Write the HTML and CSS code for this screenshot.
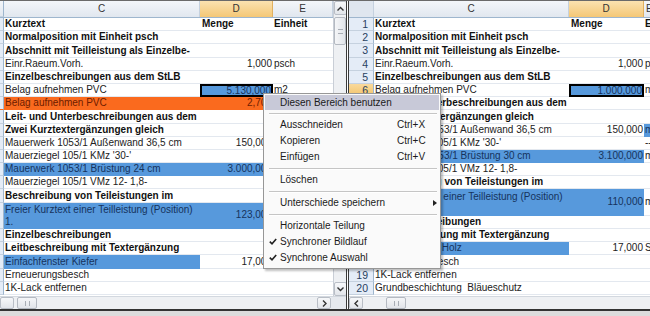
FILE: index.html
```html
<!DOCTYPE html>
<html lang="de">
<head>
    <meta charset="UTF-8">
    <title>Vergleich nebeneinander</title>
    <link rel="stylesheet" href="styles.css">
</head>
<body>
<div class="window">
    <div class="panes">
        <!-- linkes Fenster -->
        <div class="pane pane-left">
            <div class="sheet">
                <div class="grid">
                    <div class="row head">
                        <div class="strip"></div>
                        <div class="hc">C</div>
                        <div class="hc sel">D</div>
                        <div class="hc">E</div>
                    </div>
                    <div class="row"><div class="strip"></div><div class="c b">Kurztext</div><div class="d b left">Menge</div><div class="e b">Einheit</div></div>
                    <div class="row"><div class="strip"></div><div class="c b">Normalposition mit Einheit psch</div><div class="d"></div><div class="e"></div></div>
                    <div class="row"><div class="strip"></div><div class="c b">Abschnitt mit Teilleistung als Einzelbe-</div><div class="d"></div><div class="e"></div></div>
                    <div class="row"><div class="strip"></div><div class="c">Einr.Raeum.Vorh.</div><div class="d">1,000</div><div class="e">psch</div></div>
                    <div class="row"><div class="strip"></div><div class="c b">Einzelbeschreibungen aus dem StLB</div><div class="d"></div><div class="e"></div></div>
                    <div class="row"><div class="strip"></div><div class="c">Belag aufnehmen PVC</div><div class="d active">5.130,000</div><div class="e">m2</div></div>
                    <div class="row orange"><div class="strip"></div><div class="c">Belag aufnehmen PVC</div><div class="d">2,700</div><div class="e">m2</div></div>
                    <div class="row"><div class="strip"></div><div class="c b">Leit- und Unterbeschreibungen aus dem</div><div class="d"></div><div class="e"></div></div>
                    <div class="row"><div class="strip"></div><div class="c b">Zwei Kurztextergänzungen gleich</div><div class="d"></div><div class="e"></div></div>
                    <div class="row"><div class="strip"></div><div class="c">Mauerwerk 1053/1 Außenwand 36,5 cm</div><div class="d">150,000</div><div class="e">m2</div></div>
                    <div class="row"><div class="strip"></div><div class="c">Mauerziegel 105/1 KMz '30-'</div><div class="d"></div><div class="e"></div></div>
                    <div class="row blue"><div class="strip"></div><div class="c">Mauerwerk 1053/1 Brüstung 24 cm</div><div class="d">3.000,000</div><div class="e">m</div></div>
                    <div class="row"><div class="strip"></div><div class="c">Mauerziegel 105/1 VMz 12- 1,8-</div><div class="d"></div><div class="e"></div></div>
                    <div class="row"><div class="strip"></div><div class="c b">Beschreibung von Teileistungen im</div><div class="d"></div><div class="e"></div></div>
                    <div class="row tall blue"><div class="strip"></div><div class="c">Freier Kurztext einer Teilleistung (Position)<br>1.</div><div class="d">123,000</div><div class="e">m</div></div>
                    <div class="row"><div class="strip"></div><div class="c b">Einzelbeschreibungen</div><div class="d"></div><div class="e"></div></div>
                    <div class="row"><div class="strip"></div><div class="c b">Leitbeschreibung mit Textergänzung</div><div class="d"></div><div class="e"></div></div>
                    <div class="row"><div class="strip"></div><div class="c fill">Einfachfenster Kiefer</div><div class="d">17,000</div><div class="e">St</div></div>
                    <div class="row"><div class="strip"></div><div class="c">Erneuerungsbesch</div><div class="d"></div><div class="e"></div></div>
                    <div class="row"><div class="strip"></div><div class="c">1K-Lack entfernen</div><div class="d"></div><div class="e"></div></div>
                </div>
                <div class="vscroll">
                    <div class="sbtn"><svg width="7" height="5" viewBox="0 0 7 5"><path d="M0.5 4.5 L3.5 1.5 L6.5 4.5" fill="none" stroke="#333" stroke-width="1.4"/></svg></div>
                    <div class="vthumb"><span class="grip"></span></div>
                    <div class="vtrack"></div>
                    <div class="sbtn"><svg width="7" height="5" viewBox="0 0 7 5"><path d="M0.5 0.5 L3.5 3.5 L6.5 0.5" fill="none" stroke="#333" stroke-width="1.4"/></svg></div>
                </div>
            </div>
            <div class="hscroll">
                <div class="sbtn"></div>
                <div class="hthumb"><span class="hgrip"></span></div>
                <div class="htrack"></div>
                <div class="sbtn"><svg width="5" height="7" viewBox="0 0 5 7"><path d="M1 0.5 L4 3.5 L1 6.5" fill="none" stroke="#333" stroke-width="1.4"/></svg></div>
                <div class="corner"></div>
            </div>
        </div>

        <div class="split"></div>

        <!-- rechtes Fenster -->
        <div class="pane pane-right">
            <div class="grid">
                <div class="row head">
                    <div class="hc corner-cell"></div>
                    <div class="hc">C</div>
                    <div class="hc sel">D</div>
                    <div class="hc cut">E</div>
                </div>
                <div class="row"><div class="num">1</div><div class="c b">Kurztext</div><div class="d b left">Menge</div><div class="e b">Einheit</div></div>
                <div class="row"><div class="num">2</div><div class="c b">Normalposition mit Einheit psch</div><div class="d"></div><div class="e"></div></div>
                <div class="row"><div class="num">3</div><div class="c b">Abschnitt mit Teilleistung als Einzelbe-</div><div class="d"></div><div class="e"></div></div>
                <div class="row"><div class="num">4</div><div class="c">Einr.Raeum.Vorh.</div><div class="d">1,000</div><div class="e">psch</div></div>
                <div class="row"><div class="num">5</div><div class="c b">Einzelbeschreibungen aus dem StLB</div><div class="d"></div><div class="e"></div></div>
                <div class="row"><div class="num cur">6</div><div class="c">Belag aufnehmen PVC</div><div class="d active">1.000,000</div><div class="e">m2</div></div>
                <div class="row"><div class="num">7</div><div class="c b">Leit- und Unterbeschreibungen aus dem</div><div class="d"></div><div class="e"></div></div>
                <div class="row"><div class="num">8</div><div class="c b">Zwei Kurztextergänzungen gleich</div><div class="d"></div><div class="e"></div></div>
                <div class="row"><div class="num">9</div><div class="c">Mauerwerk 1053/1 Außenwand 36,5 cm</div><div class="d">150,000</div><div class="e fill">m2</div></div>
                <div class="row"><div class="num">10</div><div class="c">Mauerziegel 105/1 KMz '30-'</div><div class="d"></div><div class="e">--</div></div>
                <div class="row blue-cd"><div class="num">11</div><div class="c">Mauerwerk 1053/1 Brüstung 30 cm</div><div class="d">3.100,000</div><div class="e">m</div></div>
                <div class="row"><div class="num">12</div><div class="c">Mauerziegel 105/1 VMz 12- 1,8-</div><div class="d"></div><div class="e"></div></div>
                <div class="row"><div class="num">13</div><div class="c b">Beschreibung von Teileistungen im</div><div class="d"></div><div class="e"></div></div>
                <div class="row tall blue-cd"><div class="num">14</div><div class="c">Freier Kurztext einer Teilleistung (Position)<br>1.</div><div class="d">110,000</div><div class="e">m</div></div>
                <div class="row"><div class="num">15</div><div class="c b">Einzelbeschreibungen</div><div class="d"></div><div class="e"></div></div>
                <div class="row"><div class="num">16</div><div class="c b">Leitbeschreibung mit Textergänzung</div><div class="d"></div><div class="e"></div></div>
                <div class="row"><div class="num">17</div><div class="c fill">Einfachfenster Holz</div><div class="d">17,000</div><div class="e">St</div></div>
                <div class="row"><div class="num">18</div><div class="c">Erneuerungsbesch</div><div class="d"></div><div class="e"></div></div>
                <div class="row"><div class="num">19</div><div class="c">1K-Lack entfernen</div><div class="d"></div><div class="e"></div></div>
                <div class="row"><div class="num">20</div><div class="c">Grundbeschichtung&nbsp; Bläueschutz</div><div class="d"></div><div class="e"></div></div>
            </div>
            <div class="hscroll">
                <div class="sbtn"><svg width="5" height="7" viewBox="0 0 5 7"><path d="M4 0.5 L1 3.5 L4 6.5" fill="none" stroke="#333" stroke-width="1.4"/></svg></div>
                <div class="gap"></div>
                <div class="hthumb"><span class="hgrip"></span></div>
                <div class="htrack"></div>
            </div>
        </div>
    </div>
    <div class="statusbar"></div>

    <!-- Kontextmenü -->
    <div class="menu">
        <div class="item hot">Diesen Bereich benutzen</div>
        <div class="sep"></div>
        <div class="item">Ausschneiden<span class="key">Ctrl+X</span></div>
        <div class="item">Kopieren<span class="key">Ctrl+C</span></div>
        <div class="item">Einfügen<span class="key">Ctrl+V</span></div>
        <div class="sep"></div>
        <div class="item">Löschen</div>
        <div class="sep"></div>
        <div class="item">Unterschiede speichern<span class="arrow"></span></div>
        <div class="sep"></div>
        <div class="item">Horizontale Teilung</div>
        <div class="item"><svg class="check" width="8" height="7" viewBox="0 0 8 7"><path d="M0.8 3.6 L3 5.8 L7.2 1" fill="none" stroke="#222" stroke-width="1.6"/></svg>Synchroner Bildlauf</div>
        <div class="item"><svg class="check" width="8" height="7" viewBox="0 0 8 7"><path d="M0.8 3.6 L3 5.8 L7.2 1" fill="none" stroke="#222" stroke-width="1.6"/></svg>Synchrone Auswahl</div>
    </div>
</div>
</body>
</html>
```

FILE: styles.css
```css
* {
    box-sizing: border-box;
}

body {
    margin: 0;
    padding: 0;
    font-family: 'Liberation Sans', Arial, sans-serif;
    font-size: 10px;
    color: #222;
    background: #fff;
}

.window {
    position: relative;
    width: 650px;
    height: 316px;
    overflow: hidden;
    border-top: 1px solid #6a6a6a;
}

.panes {
    display: flex;
    height: 308px;
}

.pane {
    display: flex;
    flex-direction: column;
    overflow: hidden;
}

.pane-left {
    width: 346px;
}

.pane-right {
    flex: 1;
}

.sheet {
    display: flex;
    flex: 1;
}

.grid {
    flex: 1;
    overflow: hidden;
}

.row {
    display: grid;
    height: 13.2px;
    line-height: 12px;
    white-space: nowrap;
}

.pane-left .row {
    grid-template-columns: 4px 196px 73px 60px;
}

.pane-right .row {
    grid-template-columns: 25px 195px 75px 80px;
}

.row.tall {
    height: 26.4px;
}

.row.head {
    height: 17px;
    line-height: 16px;
    background: linear-gradient(#f3f6fa, #e1e7ef);
    border-bottom: 1px solid #9eb6ce;
}

.hc {
    text-align: center;
    color: #333;
    border-right: 1px solid #c5d1df;
}

.hc.sel {
    background: linear-gradient(#fbe2b0, #f4c776);
    border-right-color: #e0b060;
}

.hc.cut {
    text-align: left;
    padding-left: 2px;
}

.strip {
    background: #e4ecf7;
    border-right: 1px solid #9eb6ce;
    border-bottom: 1px solid #c5d1df;
}

.head .strip {
    background: transparent;
}

.c, .d, .e {
    padding: 0 2px;
    overflow: hidden;
    border-bottom: 1px solid #e3e8ef;
    display: flex;
    align-items: flex-end;
}

.c {
    padding-left: 1px;
}

.d {
    justify-content: flex-end;
    padding-right: 1px;
}

.d.left {
    justify-content: flex-start;
}

.e {
    padding-left: 1px;
    overflow: visible;
}

.tall .d, .tall .e {
    align-items: center;
}

.b {
    font-weight: bold;
    color: #111;
}

.num {
    background: #e4ecf7;
    border-right: 1px solid #9eb6ce;
    border-bottom: 1px solid #c5d1df;
    text-align: right;
    padding-right: 5px;
    color: #27415f;
    font-size: 10.5px;
}

.num.cur {
    background: linear-gradient(#f9d99c, #f3c46b);
}

.corner-cell {
    background: #dfe6ef;
}

/* Hervorhebungen */
.orange > div {
    background: #fa6a1e;
    color: #6d1c00;
    border-bottom-color: #fa6a1e;
}

.orange > .strip {
    background: #e4ecf7;
}

.blue .c, .blue .d,
.blue-cd .c, .blue-cd .d,
.fill {
    background: #5799dc;
    color: #16335c;
    border-bottom-color: #5799dc;
}

.active {
    background: #5799dc;
    color: #16335c;
    border: 2px solid #000;
    padding-right: 0;
    align-items: center;
}

/* Bildlaufleisten */
.vscroll {
    width: 13px;
    display: flex;
    flex-direction: column;
    background: #eef0f3;
    border-left: 1px solid #c9ced6;
}

.sbtn {
    height: 14px;
    width: 13px;
    display: flex;
    align-items: center;
    justify-content: center;
    background: linear-gradient(#f7f8fa, #e2e5ea);
    border: 1px solid #b9bec6;
    border-radius: 2px;
    flex-shrink: 0;
}

.vthumb {
    height: 28px;
    margin-top: 2px;
    background: linear-gradient(90deg, #f5f6f8, #e1e4e9);
    border: 1px solid #b4b9c1;
    border-radius: 2px;
    display: flex;
    align-items: center;
    justify-content: center;
}

.grip {
    width: 5px;
    height: 5px;
    border-top: 1px solid #a8adb5;
    border-bottom: 1px solid #a8adb5;
}

.vtrack {
    flex: 1;
}

.hscroll {
    height: 13px;
    display: flex;
    background: #eef0f3;
    border-top: 1px solid #d3d8df;
    flex-shrink: 0;
}

.hscroll .sbtn {
    width: 14px;
    height: 12px;
}

.hthumb {
    width: 20px;
    margin-left: 3px;
    background: linear-gradient(#f5f6f8, #e1e4e9);
    border: 1px solid #b4b9c1;
    border-radius: 2px;
    display: flex;
    align-items: center;
    justify-content: center;
}

.hgrip {
    width: 5px;
    height: 5px;
    border-left: 1px solid #a8adb5;
    border-right: 1px solid #a8adb5;
}

.htrack {
    flex: 1;
}

.pane-right .hscroll .gap {
    width: 20px;
}

.corner {
    width: 15px;
    background: #e6e9ee;
}

.split {
    width: 3px;
    background: #fff;
    border-left: 1px solid #3a3a3a;
    border-right: 1px solid #3a3a3a;
}

.statusbar {
    height: 8px;
    border-top: 2px solid #333;
    background: #dcdcdc;
}

/* Kontextmenü */
.menu {
    position: absolute;
    left: 263px;
    top: 92px;
    width: 178px;
    padding: 1px 1px 2px;
    background: #fafafa;
    border: 1px solid #979797;
    box-shadow: 2px 2px 2px rgba(0, 0, 0, 0.25);
    color: #1a1a1a;
}

.item {
    position: relative;
    height: 16px;
    line-height: 16px;
    padding-left: 15px;
}

.item.hot {
    height: 15px;
    line-height: 15px;
    background: #c8c9d8;
}

.key {
    position: absolute;
    left: 132px;
}

.arrow {
    position: absolute;
    left: 168px;
    top: 5px;
    border-left: 4px solid #222;
    border-top: 3px solid transparent;
    border-bottom: 3px solid transparent;
}

.check {
    position: absolute;
    left: 4px;
    top: 4px;
}

.sep {
    height: 7px;
    margin: 0 2px 0 4px;
    position: relative;
}

.sep::after {
    content: "";
    position: absolute;
    left: 0;
    right: 0;
    top: 3px;
    border-top: 1px solid #c5c5c5;
    border-bottom: 1px solid #fff;
}
```
